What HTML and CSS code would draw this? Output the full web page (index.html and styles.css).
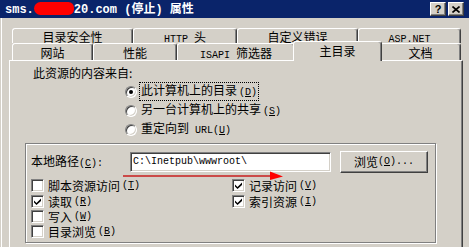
FILE: index.html
```html
<!DOCTYPE html>
<html lang="zh-CN">
<head>
	<meta charset="UTF-8">
	<title>属性</title>
	<link rel="stylesheet" href="styles.css">
</head>
<body>
	<div class="window">
		<div class="titlebar">
			<div class="title">sms.<span class="redact"></span>20.com (<span class="cjk">停止</span>) <span class="cjk">属性</span></div>
			<div class="caption-btns">
				<span class="cbtn help">?</span>
				<span class="cbtn close"><svg width="8" height="7" viewBox="0 0 8 7"><path d="M0.5 0.5L7.5 6.5M7.5 0.5L0.5 6.5" stroke="#000" stroke-width="1.6"/></svg></span>
			</div>
		</div>

		<div class="tabs">
			<div class="tabrow back">
				<div class="tab t-sec">目录安全性</div>
				<div class="tab t-http"><span class="en">HTTP </span>头</div>
				<div class="tab t-err">自定义错误</div>
				<div class="tab t-asp"><span class="en">ASP.NET</span></div>
			</div>
			<div class="tabrow front">
				<div class="tab t-site">网站</div>
				<div class="tab t-perf">性能</div>
				<div class="tab t-isapi"><span class="en">ISAPI </span>筛选器</div>
				<div class="tab t-home on">主目录</div>
				<div class="tab t-doc">文档</div>
			</div>
		</div>

		<div class="panel">
			<p class="source">此资源的内容来自:</p>
			<ul class="radios">
				<li><span class="radio checked"></span><span class="rlabel focus">此计算机上的目录<span class="en key">(<u>D</u>)</span></span></li>
				<li><span class="radio"></span><span class="rlabel">另一台计算机上的共享<span class="en key">(<u>S</u>)</span></span></li>
				<li><span class="radio"></span><span class="rlabel">重定向到<span class="en"> URL(<u>U</u>)</span></span></li>
			</ul>

			<div class="group">
				<div class="pathrow">
					<label class="pathlabel">本地路径<span class="en">(<u>C</u>):</span></label>
					<div class="field">C:\Inetpub\wwwroot\</div>
					<div class="button">浏览<span class="en">(<u>O</u>)...</span></div>
				</div>
				<div class="checks">
					<div class="check"><span class="box"></span>脚本资源访问<span class="en key">(<u>T</u>)</span></div>
					<div class="check"><span class="box on"><svg width="7" height="7" viewBox="0 0 7 7"><polygon points="0,2.5 2.5,5 7,0.5 7,3 2.5,7 0,4.5" fill="#000"/></svg></span>记录访问<span class="en key">(<u>V</u>)</span></div>
					<div class="check"><span class="box on"><svg width="7" height="7" viewBox="0 0 7 7"><polygon points="0,2.5 2.5,5 7,0.5 7,3 2.5,7 0,4.5" fill="#000"/></svg></span>读取<span class="en key">(<u>R</u>)</span></div>
					<div class="check"><span class="box on"><svg width="7" height="7" viewBox="0 0 7 7"><polygon points="0,2.5 2.5,5 7,0.5 7,3 2.5,7 0,4.5" fill="#000"/></svg></span>索引资源<span class="en key">(<u>I</u>)</span></div>
					<div class="check"><span class="box"></span>写入<span class="en key">(<u>W</u>)</span></div>
					<div class="check"></div>
					<div class="check"><span class="box"></span>目录浏览<span class="en key">(<u>B</u>)</span></div>
				</div>
			</div>
		</div>

		<!-- 标注箭头 -->
		<svg class="annot" width="469" height="247" viewBox="0 0 469 247">
			<line x1="123" y1="176" x2="273" y2="176" stroke="#c81e1e" stroke-width="1.5"/>
			<polygon points="270,171.5 283,176.5 270,180" fill="#ff0000"/>
		</svg>
	</div>
</body>
</html>
```

FILE: styles.css
```css
*{box-sizing:border-box;}
body,div,ul,li,p{margin:0;padding:0;}
body{width:469px;height:247px;overflow:hidden;background:#d4d0c8;color:#000;font:12px/14px "Noto Sans CJK SC",sans-serif;}
ul{list-style-type:none;}
u{text-decoration:underline;text-underline-offset:1px;}
.en{font-family:"Liberation Mono",monospace;font-size:10px;}
.key{padding-left:2px;}

.window{position:relative;width:469px;height:247px;background:#d4d0c8;box-shadow:inset 1px 0 #d4d0c8,inset 2px 0 #fff;}

/* 标题栏 */
.titlebar{height:18px;background:#0a246a;color:#fff;display:flex;align-items:center;justify-content:space-between;padding:0 5px;}
.title{font:bold 12px/16px "Liberation Mono","Noto Sans CJK SC",monospace;white-space:nowrap;}
.title .cjk{font-family:"Noto Sans CJK SC",sans-serif;}
.redact{display:inline-block;width:40px;height:13px;background:#f00;border-radius:7px 6px 6px 7px;vertical-align:-2px;}
.caption-btns{display:flex;}
.cbtn{width:16px;height:14px;background:#d4d0c8;border:1px solid;border-color:#fff #404040 #404040 #fff;box-shadow:inset -1px -1px #808080;display:flex;align-items:center;justify-content:center;color:#000;font:bold 11px/12px "Liberation Sans",sans-serif;}
.close{margin-left:2px;}

/* 选项卡 */
.tabs{margin:10px 0 0 12px;width:449px;}
.tabrow{display:flex;align-items:flex-start;}
.tabrow.back{height:15px;}
.tabrow.front{height:17px;}
.tab{flex:none;height:17px;background:#d4d0c8;border:1px solid;border-bottom:0;border-color:#fff #404040 transparent #fff;box-shadow:inset -1px 0 #808080;border-radius:3px 3px 0 0;padding-top:2px;line-height:13px;text-align:center;white-space:nowrap;}
.back .tab{height:15px;padding-top:1px;}
.tab.on{position:relative;z-index:1;height:20px;margin:-2px -2px 0;}
.t-sec{width:121px;}
.t-http{width:104px;}
.t-err{width:121px;}
.t-asp{width:103px;}
.t-site{width:81px;}
.t-perf{width:84px;}
.t-isapi{width:118px;}
.t-home{width:89px;}
.t-doc{width:81px;}

/* 主面板 */
.panel{margin-left:9px;width:454px;height:190px;border-top:1px solid #fff;border-left:1px solid #fff;border-right:1px solid #404040;box-shadow:inset -1px 0 #808080;}
.source{margin:5px 0 0 23px;}
.radios{margin:2px 0 0 115px;}
.radios li{display:flex;align-items:center;height:19px;}
.radio{position:relative;flex:none;width:12px;height:12px;border-radius:50%;background:#fff;border:1px solid;border-color:#808080 #fff #fff #808080;box-shadow:inset 1px 1px #404040,inset -1px -1px #d4d0c8;}
.radio.checked:after{content:"";position:absolute;left:3px;top:3px;width:4px;height:4px;border-radius:50%;background:#000;}
.rlabel{margin-left:2px;padding:0 1px;border:1px dotted transparent;line-height:14px;}
.rlabel.focus{border-color:#000;}

.group{margin:4px 0 0 15px;width:411px;height:100px;border:1px solid #808080;box-shadow:1px 1px #fff,inset 1px 1px #fff;padding:7px 0 0 5px;}
.pathrow{display:flex;align-items:center;height:22px;}
.pathlabel{width:99px;}
.field{width:201px;height:20px;background:#fff;border:1px solid;border-color:#808080 #fff #fff #808080;box-shadow:inset 1px 1px #404040,inset -1px -1px #d4d0c8;padding-left:2px;font:10px/18px "Liberation Mono",monospace;}
.button{margin-left:9px;width:88px;height:22px;border:1px solid;border-color:#fff #404040 #404040 #fff;box-shadow:inset -1px -1px #808080;display:flex;align-items:center;justify-content:center;}

.checks{display:grid;grid-template-columns:201px 1fr;grid-template-rows:16px 15px 15px 15px;margin-top:6px;}
.check{display:flex;align-items:flex-start;line-height:13px;white-space:nowrap;}
.box{flex:none;width:13px;height:13px;margin-right:4px;background:#fff;border:1px solid;border-color:#808080 #fff #fff #808080;box-shadow:inset 1px 1px #404040,inset -1px -1px #d4d0c8;display:flex;align-items:center;justify-content:center;}

.annot{position:absolute;left:0;top:0;pointer-events:none;}
```
